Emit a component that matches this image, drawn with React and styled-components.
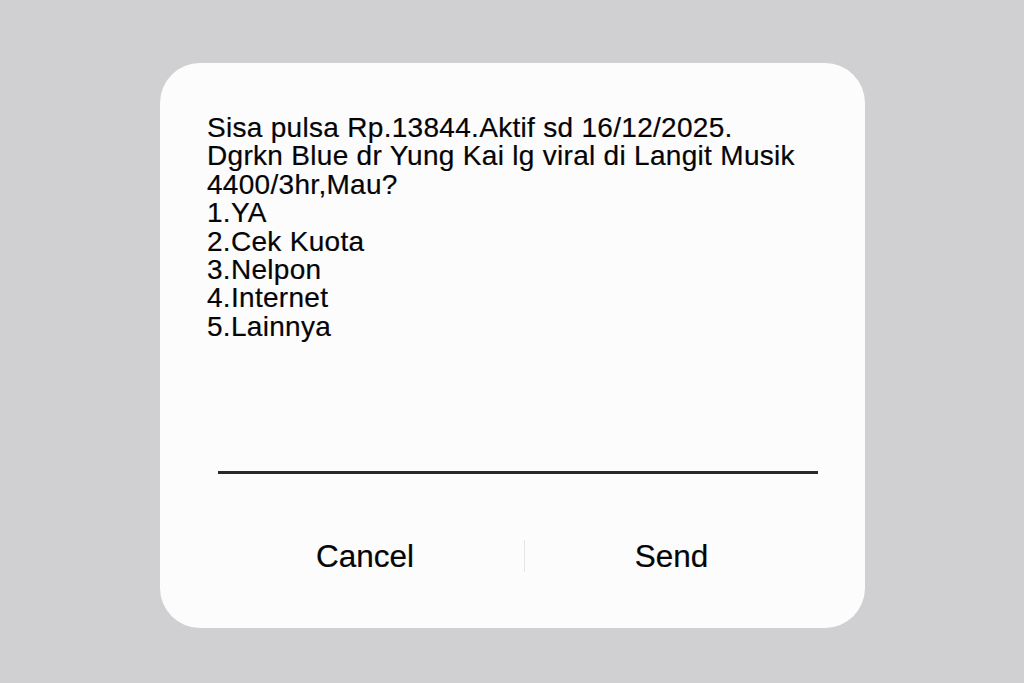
import React from "react";
import styled, { createGlobalStyle } from "styled-components";

const GlobalStyle = createGlobalStyle`
  html, body {
    margin: 0;
    padding: 0;
    background: #d0d0d2;
  }
  body {
    font-family: "Liberation Sans", Arial, sans-serif;
  }
`;

const Screen = styled.div`
  width: 1024px;
  height: 683px;
  box-sizing: border-box;
  padding: 63px 0 0 160px;
  background: #d0d0d2;
`;

const Dialog = styled.div`
  width: 705px;
  height: 565px;
  box-sizing: border-box;
  background: #fcfcfd;
  border-radius: 40px;
  display: flex;
  flex-direction: column;
  padding: 51px 47px 0 47px;
`;

const Message = styled.div`
  font-size: 28px;
  line-height: 28.4px;
  letter-spacing: 0.3px;
  color: #050505;
  white-space: pre-line;
  flex: 1;
  -webkit-text-stroke: 0.2px #050505;
`;

const InputLine = styled.div`
  height: 3px;
  background: #2a2a2a;
  margin-left: 11px;
`;

const Actions = styled.div`
  display: flex;
  align-items: center;
  height: 154px;
  box-sizing: border-box;
  padding-top: 10px;
  margin-left: 11px;
`;

const ActionButton = styled.button`
  flex: ${(p) => (p.$first ? "0 0 306px" : "1")};
  padding: 0 ${(p) => (p.$first ? "12px" : "0")} 0 0;
  border: none;
  background: none;
  font-family: "Liberation Sans", Arial, sans-serif;
  font-size: 31.5px;
  color: #050505;
  -webkit-text-stroke: 0.2px #050505;
  cursor: pointer;
`;

const Divider = styled.div`
  width: 1px;
  height: 32px;
  background: #e6e6e8;
`;

const text = `Sisa pulsa Rp.13844.Aktif sd 16/12/2025.
Dgrkn Blue dr Yung Kai lg viral di Langit Musik
4400/3hr,Mau?
1.YA
2.Cek Kuota
3.Nelpon
4.Internet
5.Lainnya`;

export default function App() {
  return (
    <>
      <GlobalStyle />
      <Screen>
        <Dialog>
          <Message>{text}</Message>
          <InputLine />
          <Actions>
            <ActionButton type="button" $first>Cancel</ActionButton>
            <Divider />
            <ActionButton type="button">Send</ActionButton>
          </Actions>
        </Dialog>
      </Screen>
    </>
  );
}
